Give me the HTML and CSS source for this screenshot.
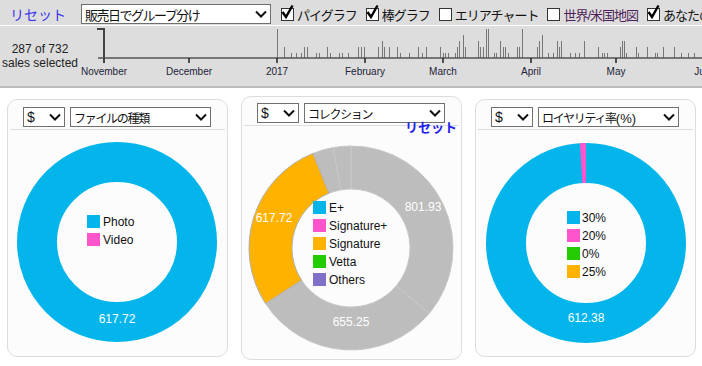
FILE: index.html
```html
<!DOCTYPE html>
<html>
<head>
  <meta charset="UTF-8" />
  <title>Sales Dashboard</title>
  <link rel="stylesheet" href="styles.css">
</head>
<body>

  <!-- Controls -->
  <div class="topbar">
    <a class="reset" href="#">リセット</a>
    <div class="select group-select">
      <span>販売日でグループ分け</span>
      <svg class="chev" width="12" height="8"><path d="M1 1.5 L6 6.5 L11 1.5"/></svg>
    </div>
    <label class="check"><span class="box"><svg class="tick" width="14" height="14"><path d="M1.5 4 L5 9 L11.5 -2.5"/></svg></span>パイグラフ</label>
    <label class="check"><span class="box"><svg class="tick" width="14" height="14"><path d="M1.5 4 L5 9 L11.5 -2.5"/></svg></span>棒グラフ</label>
    <label class="check"><span class="box"></span>エリアチャート</label>
    <label class="check map"><span class="box"></span>世界/米国地図</label>
    <label class="check"><span class="box"><svg class="tick" width="14" height="14"><path d="M1.5 4 L5 9 L11.5 -2.5"/></svg></span>あなたのポートフォリオ</label>
  </div>

  <!-- Timeline -->
  <div class="timeline">
    <div class="count">287 of 732<br />sales selected</div>
    <svg class="time-chart" width="622" height="60" viewBox="80 26 622 60">
      <path class="bars" d="M284.5 58V47 M291.5 58V53 M296.5 58V53 M301.5 58V53 M304.5 58V47 M307.5 58V47 M316.5 58V53 M319.5 58V53 M327.5 58V47 M330.5 58V53 M339.5 58V53 M342.5 58V53 M348.5 58V53 M358.5 58V47 M361.5 58V47 M364.5 58V47 M378.5 58V47 M382.5 58V41 M384.5 58V47 M389.5 58V47 M397.5 58V47 M400.5 58V53 M409.5 58V53 M418.5 58V47 M422.5 58V53 M426.5 58V47 M440.5 58V47 M443.5 58V53 M445.5 58V53 M448.5 58V53 M455.5 58V53 M457.5 58V47 M459.5 58V41 M463.5 58V35 M465.5 58V47 M478.5 58V41 M480.5 58V47 M483.5 58V47 M486.5 58V29 M488.5 58V29 M494.5 58V53 M496.5 58V53 M500.5 58V41 M503.5 58V47 M505.5 58V47 M508.5 58V53 M517.5 58V47 M519.5 58V47 M522.5 58V29 M537.5 58V47 M539.5 58V41 M542.5 58V35 M548.5 58V53 M553.5 58V53 M557.5 58V41 M559.5 58V47 M561.5 58V41 M570.5 58V53 M575.5 58V53 M579.5 58V53 M584.5 58V41 M598.5 58V47 M602.5 58V53 M604.5 58V53 M607.5 58V53 M620.5 58V47 M622.5 58V41 M624.5 58V41 M626.5 58V53 M636.5 58V47 M638.5 58V53 M647.5 58V47 M655.5 58V53 M657.5 58V53 M663.5 58V47 M674.5 58V47 M681.5 58V53 M688.5 58V53 M694.5 58V53 M277.5 58V29"/>
      <line class="axis" x1="98" y1="58" x2="702" y2="58"/>
      <path class="ticks" d="M104 58V63 M189 58V63 M277 58V63 M365 58V63 M443 58V63 M531 58V63 M616 58V63"/>
      <path class="brush" d="M97 29H104V63"/>
      <text x="104" y="75">November</text>
      <text x="189" y="75">December</text>
      <text x="277" y="75">2017</text>
      <text x="365" y="75">February</text>
      <text x="443" y="75">March</text>
      <text x="531" y="75">April</text>
      <text x="616" y="75">May</text>
      <text x="705" y="75">June</text>
    </svg>
  </div>

  <!-- Pie charts -->
  <div class="panels">

    <div class="panel">
      <div class="panel-head">
        <div class="select cur-select"><span>$</span><svg class="chev" width="12" height="8"><path d="M1 1.5 L6 6.5 L11 1.5"/></svg></div>
        <div class="select dim-select"><span>ファイルの種類</span><svg class="chev" width="12" height="8"><path d="M1 1.5 L6 6.5 L11 1.5"/></svg></div>
      </div>
      <div class="rule"></div>
      <svg class="donut" width="219" height="224">
        <circle cx="109" cy="112" r="80" fill="none" stroke="#03b5eb" stroke-width="40"/>
        <text class="val" x="109" y="193">617.72</text>
        <rect x="79" y="85" width="13" height="13" fill="#03b5eb"/>
        <text class="leg" x="95" y="96">Photo</text>
        <rect x="79" y="103" width="13" height="13" fill="#ff55cc"/>
        <text class="leg" x="95" y="114">Video</text>
      </svg>
    </div>

    <div class="panel panel-reset">
      <div class="panel-head">
        <div class="select cur-select"><span>$</span><svg class="chev" width="12" height="8"><path d="M1 1.5 L6 6.5 L11 1.5"/></svg></div>
        <div class="select dim-select"><span>コレクション</span><svg class="chev" width="12" height="8"><path d="M1 1.5 L6 6.5 L11 1.5"/></svg></div>
      </div>
      <div class="rule"></div>
      <a class="reset-link" href="#">リセット</a>
      <svg class="donut" width="219" height="224">
        <g class="slices">
          <path d="M109,11 A102,102 0 0 1 187.13,178.57 L154.19,150.93 A59,59 0 0 0 109,54 Z" fill="#bdbdbd"/>
          <path d="M187.13,178.57 A102,102 0 0 1 23.45,168.55 L59.52,145.13 A59,59 0 0 0 154.19,150.93 Z" fill="#bdbdbd"/>
          <path d="M70.79,18.43 A102,102 0 0 1 91.29,12.55 L98.76,54.9 A59,59 0 0 0 86.9,58.3 Z" fill="#bdbdbd"/>
          <path d="M91.29,12.55 A102,102 0 0 1 109,11 L109,54 A59,59 0 0 0 98.76,54.9 Z" fill="#bdbdbd"/>
          <path class="picked" d="M23.45,168.55 A102,102 0 0 1 70.79,18.43 L86.9,58.3 A59,59 0 0 0 59.52,145.13 Z" fill="#ffb300"/>
        </g>
        <text class="val" x="181" y="76">801.93</text>
        <text class="val" x="32" y="87">617.72</text>
        <text class="val" x="109" y="191">655.25</text>
        <rect x="71" y="66" width="13" height="13" fill="#03b5eb"/>
        <text class="leg" x="87" y="77">E+</text>
        <rect x="71" y="84" width="13" height="13" fill="#ff55cc"/>
        <text class="leg" x="87" y="95">Signature+</text>
        <rect x="71" y="102" width="13" height="13" fill="#ffb300"/>
        <text class="leg" x="87" y="113">Signature</text>
        <rect x="71" y="120" width="13" height="13" fill="#22cc00"/>
        <text class="leg" x="87" y="131">Vetta</text>
        <rect x="71" y="138" width="13" height="13" fill="#8070c8"/>
        <text class="leg" x="87" y="149">Others</text>
      </svg>
    </div>

    <div class="panel">
      <div class="panel-head">
        <div class="select cur-select"><span>$</span><svg class="chev" width="12" height="8"><path d="M1 1.5 L6 6.5 L11 1.5"/></svg></div>
        <div class="select dim-select"><span>ロイヤリティ率<span class="latin">(%)</span></span><svg class="chev" width="12" height="8"><path d="M1 1.5 L6 6.5 L11 1.5"/></svg></div>
      </div>
      <div class="rule"></div>
      <svg class="donut" width="219" height="224">
        <circle cx="110" cy="113" r="80" fill="none" stroke="#03b5eb" stroke-width="40"/>
        <path d="M103.9,13.19 A100,100 0 0 1 110,13 L110,53 A60,60 0 0 0 106.34,53.11 Z" fill="#ff55cc"/>
        <text class="val" x="110" y="192">612.38</text>
        <rect x="91" y="81" width="13" height="13" fill="#03b5eb"/>
        <text class="leg" x="106" y="92">30%</text>
        <rect x="91" y="99" width="13" height="13" fill="#ff55cc"/>
        <text class="leg" x="106" y="110">20%</text>
        <rect x="91" y="117" width="13" height="13" fill="#22cc00"/>
        <text class="leg" x="106" y="128">0%</text>
        <rect x="91" y="135" width="13" height="13" fill="#ffb300"/>
        <text class="leg" x="106" y="146">25%</text>
      </svg>
    </div>

  </div>

</body>
</html>
```

FILE: styles.css
```css
body {
  margin: 0;
  background: #fff;
  font-family: "Liberation Sans", "Noto Sans CJK JP", sans-serif;
  color: #222;
}

a {
  text-decoration: none;
}

/* top controls */
.topbar {
  display: flex;
  align-items: center;
  height: 26px;
  box-sizing: border-box;
  padding: 4px 0 1px 10px;
  background: #ddd;
  border-bottom: 1px solid #fff;
  white-space: nowrap;
  overflow: hidden;
}

.reset {
  width: 71px;
  flex: none;
  font-size: 14px;
  color: #3a32ee;
}

.select {
  display: flex;
  align-items: center;
  justify-content: space-between;
  box-sizing: border-box;
  height: 20px;
  padding: 0 3px 0 3px;
  background: #fff;
  border: 1px solid #707070;
  flex: none;
  color: #111;
}

.chev path {
  fill: none;
  stroke: #111;
  stroke-width: 2;
}

.group-select {
  width: 190px;
  margin-right: 10px;
  font-size: 13px;
  letter-spacing: -1.5px;
}

.check {
  display: flex;
  align-items: center;
  margin-right: 9px;
  font-size: 13px;
  letter-spacing: -1px;
  color: #111;
  flex: none;
}

.check.map {
  color: #4e1e58;
}

.box {
  position: relative;
  width: 13px;
  height: 13px;
  box-sizing: border-box;
  margin-right: 3px;
  border: 1px solid #333;
  background: #fff;
}

.tick {
  position: absolute;
  left: -1px;
  top: -1px;
  overflow: visible;
}

.tick path {
  fill: none;
  stroke: #000;
  stroke-width: 2.4;
}

/* timeline */
.timeline {
  display: flex;
  align-items: center;
  height: 62px;
  box-sizing: border-box;
  background: #ddd;
  border-bottom: 2px solid #bbb;
  overflow: hidden;
}

.count {
  width: 80px;
  flex: none;
  text-align: center;
  font-size: 12px;
  line-height: 14px;
  color: #222;
}

.time-chart {
  display: block;
  flex: none;
}

.time-chart .bars {
  stroke: #777;
  stroke-width: 1;
}

.time-chart .axis {
  stroke: #555;
  stroke-width: 1.5;
}

.time-chart .ticks {
  stroke: #222;
  stroke-width: 1.5;
}

.time-chart .brush {
  fill: none;
  stroke: #444;
  stroke-width: 2;
}

.time-chart text {
  font-family: "Liberation Sans", sans-serif;
  font-size: 10px;
  fill: #1c2238;
  text-anchor: middle;
}

/* pie panels */
.panels {
  display: flex;
  align-items: center;
  gap: 13px;
  padding: 8px 0 0 7px;
}

.panel {
  width: 221px;
  flex: none;
  box-sizing: border-box;
  padding: 7px 0 2px;
  background: #fcfcfc;
  border: 1px solid #ddd;
  border-radius: 10px;
}

.panel-reset {
  padding: 6px 0 0;
}

.panel-head {
  display: flex;
  gap: 5px;
  padding-left: 15px;
}

.cur-select {
  width: 42px;
  font-size: 14px;
}

.dim-select {
  width: 141px;
  font-size: 12px;
  letter-spacing: -1.3px;
}

.dim-select .latin {
  letter-spacing: 0;
  font-size: 13px;
}

.rule {
  margin: 2px 2px 0;
  border-top: 1px solid #ddd;
}

.reset-link {
  display: block;
  margin-top: -5px;
  height: 14px;
  line-height: 14px;
  padding-right: 4px;
  text-align: right;
  font-size: 13px;
  font-weight: bold;
  color: #2020ee;
  position: relative;
}

.donut {
  display: block;
}

.donut .val {
  font-family: "Liberation Sans", sans-serif;
  font-size: 12px;
  fill: #fff;
  text-anchor: middle;
}

.donut .leg {
  font-family: "Liberation Sans", sans-serif;
  font-size: 12px;
  fill: #111;
}

.slices path {
  stroke: #c8c8c8;
  stroke-width: 1;
}

.slices .picked {
  stroke: #b0b0b0;
}
```
